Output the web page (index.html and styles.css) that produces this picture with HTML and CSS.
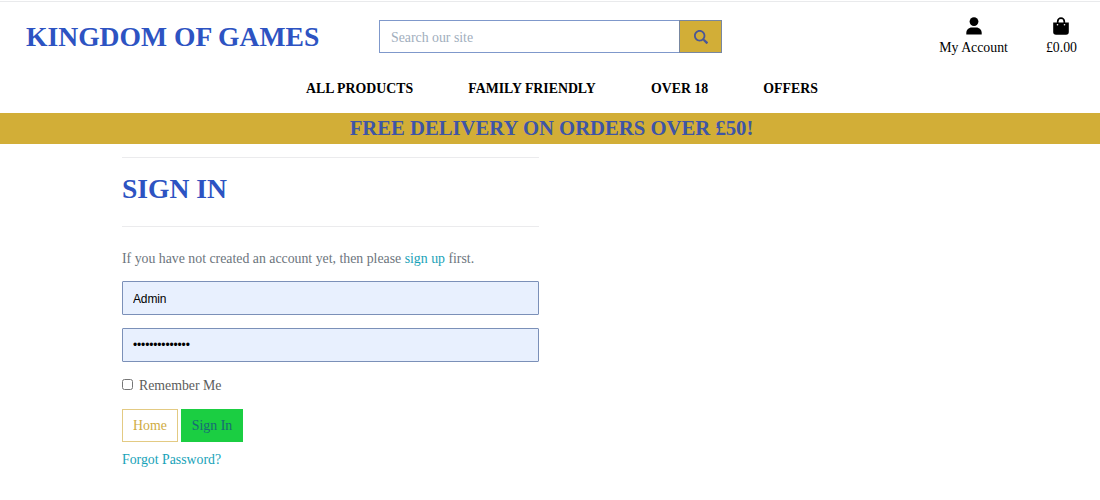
FILE: index.html
```html
<!DOCTYPE html>
<html lang="en">
<head>
<meta charset="utf-8">
<title>Kingdom of Games</title>
<link rel="stylesheet" href="styles.css">
</head>
<body>
<header class="site-header">
  <div class="top-row">
    <a class="brand">KINGDOM OF GAMES</a>
    <form class="search">
      <input class="search-input" type="text" placeholder="Search our site">
      <button class="search-button" type="button" aria-label="Search">
        <svg class="search-icon" viewBox="0 0 512 512"><path d="M505 442.700L405.300 343c-4.500-4.500-10.600-7-17-7H372c27.600-35.300 44-79.700 44-128C416 93.100 322.900 0 208 0S0 93.100 0 208s93.100 208 208 208c48.300 0 92.700-16.400 128-44v16.300c0 6.400 2.500 12.500 7 17l99.700 99.700c9.400 9.400 24.600 9.400 33.900 0l28.300-28.300c9.400-9.400 9.400-24.600.1-34zM208 352c-79.500 0-144-64.400-144-144 0-79.500 64.400-144 144-144 79.500 0 144 64.400 144 144 0 79.500-64.400 144-144 144z"/></svg>
      </button>
    </form>
    <div class="tools">
      <a class="tool account">
        <svg class="tool-icon" viewBox="0 0 18 18"><circle cx="9" cy="4.600" r="4.400"/><path d="M1.300 17.600v-1.500c0-3.300 2.300-5.600 5.600-5.600h4.200c3.300 0 5.600 2.300 5.600 5.600v1.500z"/></svg>
        <span>My Account</span>
      </a>
      <a class="tool bag">
        <svg class="tool-icon" viewBox="0 0 18 18"><path d="M5.700 7V4.400a3.300 3.300 0 0 1 6.600 0V7" fill="none" stroke="#000" stroke-width="1.700"/><path d="M1.200 5.500h15.600V15a2.800 2.800 0 0 1-2.800 2.800H4A2.800 2.800 0 0 1 1.200 15z"/><circle cx="5.500" cy="7.700" r=".8" fill="#fff"/><circle cx="12.500" cy="7.700" r=".8" fill="#fff"/></svg>
        <span>£0.00</span>
      </a>
    </div>
  </div>
  <nav class="main-nav"><a>ALL PRODUCTS</a><a>FAMILY FRIENDLY</a><a>OVER 18</a><a>OFFERS</a></nav>
</header>
<div class="delivery-banner">FREE DELIVERY ON ORDERS OVER £50!</div>
<main class="sign-in">
  <hr class="rule">
  <h1 class="title">SIGN IN</h1>
  <hr class="rule">
  <p class="intro">If you have not created an account yet, then please <a class="link">sign up</a> first.</p>
  <form>
    <input class="field" type="text" value="Admin" aria-label="Username">
    <input class="field password" type="password" value="kingdomofgames" aria-label="Password">
    <label class="remember"><input class="check" type="checkbox"><span>Remember Me</span></label>
    <div class="actions"><a class="button home">Home</a><button class="button submit" type="button">Sign In</button></div>
    <a class="link forgot">Forgot Password?</a>
  </form>
</main>
</body>
</html>
```
FILE: styles.css
```css
* { box-sizing: border-box; }
body {
  margin: 0;
  height: 500px;
  overflow: hidden;
  background: #fff;
  color: #000;
  font-family: "Liberation Serif", "Times New Roman", serif;
  font-size: 13.82px;
  line-height: 20px;
}
.site-header { height: 113px; padding-top: 1px; }
.top-row { display: flex; height: 67px; padding-left: 26px; border-top: 1px solid #e9eaec; }
.brand {
  width: 353px;
  padding-top: 17px;
  color: #2d53c2;
  font-size: 27.600px;
  font-weight: bold;
  line-height: 36px;
  white-space: nowrap;
}
.search { display: flex; width: 343px; height: 33px; margin-top: 18px; }
.search-input {
  width: 300px;
  padding: 2px 11px 0;
  border: 1px solid #7f98cb;
  border-right: 0;
  outline: 0;
  font: inherit;
}
.search-input::placeholder { color: #a1aebd; opacity: 1; }
.search-button {
  display: flex;
  align-items: center;
  justify-content: center;
  width: 43px;
  padding: 0;
  border: 1px solid #7887a0;
  background: #d2ae37;
}
.search-icon { width: 14px; height: 14px; fill: #4a5796; }
.tools { display: flex; flex: 1; justify-content: flex-end; gap: 38px; padding: 15px 23px 0 0; }
.tool { display: flex; flex-direction: column; align-items: center; line-height: 18px; }
.tool-icon { width: 18px; height: 18px; margin-bottom: 4px; }
.main-nav {
  display: flex;
  gap: 55.200px;
  padding: 11px 0 0 306px;
  font-weight: bold;
  white-space: nowrap;
}
.delivery-banner {
  height: 31px;
  padding-left: 3px;
  background: #d2ae37;
  color: #3e55a6;
  font-size: 20.700px;
  font-weight: bold;
  line-height: 31px;
  text-align: center;
}
.sign-in { width: 417px; margin-left: 122px; padding-top: 13px; }
.rule { height: 1px; margin: 0; border: 0; background: #ebebed; }
.title { margin: 0; padding-top: 13px; height: 68px; color: #2d53c2; font-size: 27.6px; line-height: 36px; }
.intro { margin: 22px 0 12px; color: #6c757d; }
.link { color: #17a2b8; }
.field {
  display: block;
  width: 417px;
  height: 34px;
  margin: 0 0 13px;
  padding: 2px 10px 0;
  border: 1px solid #7b90b8;
  border-radius: 1px;
  outline: 0;
  background: #e8f0fe;
  color: #000;
  font: 12px "Liberation Sans", Arial, sans-serif;
  letter-spacing: -.15px;
}
.password { padding-top: 0; }
.remember { display: flex; align-items: center; height: 22px; margin-top: 13px; color: #5c5c5c; }
.check { width: 11px; height: 11px; margin: 0 6px 3px 0; }
.actions { display: flex; gap: 3px; margin: 12px 0 8px; }
.button {
  height: 33px;
  padding: 0;
  border: 1px solid #e3ca83;
  background: #fff;
  color: #cfac42;
  font: inherit;
  line-height: 32px;
  text-align: center;
}
.home { width: 56px; }
.submit { width: 62px; border-color: #1bce42; background: #1bce42; color: #176b75; }
.forgot { display: block; }
```
